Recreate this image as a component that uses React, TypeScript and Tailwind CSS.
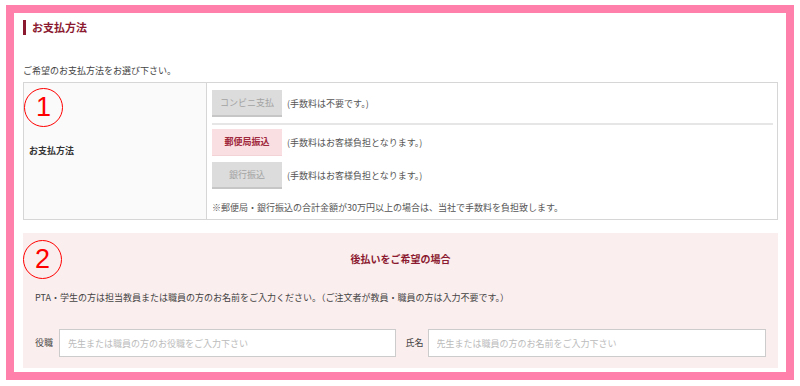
import React from 'react';

const jp = { fontFamily: '"Noto Sans CJK JP", "Noto Sans", sans-serif' };

const Marker: React.FC<{ n: string; top: string }> = ({ n, top }) => (
    <div
        className={`absolute left-0 ${top} w-[39px] h-[39px] rounded-full border-[1.5px] border-[#ff0000] flex items-center justify-center text-[#ff0000] text-[27px] leading-none`}
        style={{ fontFamily: '"Liberation Sans", Arial, sans-serif' }}
    >
        {n}
    </div>
);

interface MethodProps {
    label: string;
    note: string;
    active?: boolean;
}

const MethodRow: React.FC<MethodProps> = ({ label, note, active }) => (
    <div className="flex items-center gap-[5px]">
        <button
            type="button"
            className={
                active
                    ? 'w-[70px] h-[27px] bg-[#f9dfe1] text-[#a0283c] text-[9px] font-bold border-b border-[#f3d3d6]'
                    : 'w-[70px] h-[27px] bg-[#dcdcdc] text-[#a3a3a3] text-[9px] border-b-2 border-[#c6c6c6]'
            }
        >
            {label}
        </button>
        <span className="text-[9px] text-[#555]">{note}</span>
    </div>
);

const App: React.FC = () => {
    return (
        <div className="w-[800px] h-[386px] bg-white pt-[5px] px-[6px]" style={jp}>
            <div className="h-[375px] border-8 border-[#ff80ab] bg-white pt-[7px] pl-[9px] pr-[8px]">
                <div className="flex items-center gap-[6px] h-[15px]">
                    <div className="w-[3px] h-[15px] bg-[#8b1a30]" />
                    <h2 className="text-[11px] font-bold text-[#8b1a30] leading-none">お支払方法</h2>
                </div>

                <p className="mt-[29px] text-[9px] leading-[14px] text-[#444]">ご希望のお支払方法をお選び下さい。</p>

                <div className="relative mt-[4px] grid grid-cols-[183px_1fr] border border-[#d6d6d6] h-[138px]">
                    <Marker n="1" top="top-[5px]" />
                    <div className="bg-[#fafafa] border-r border-[#d6d6d6] flex items-center pl-[5px]">
                        <span className="text-[9px] font-bold text-[#333]">お支払方法</span>
                    </div>
                    <div className="pt-[7px] pl-[5px] pr-[4px]">
                        <MethodRow label="コンビニ支払" note="(手数料は不要です。)" />
                        <div className="mt-[6px] h-[2px] bg-[#e6e6e6]" />
                        <div className="mt-[4px] flex flex-col gap-[6px]">
                            <MethodRow label="郵便局振込" note="(手数料はお客様負担となります。)" active />
                            <MethodRow label="銀行振込" note="(手数料はお客様負担となります。)" />
                        </div>
                        <p className="mt-[12px] text-[9px] leading-[14px] text-[#555]">
                            ※郵便局・銀行振込の合計金額が30万円以上の場合は、当社で手数料を負担致します。
                        </p>
                    </div>
                </div>

                <div className="relative mt-[13px] bg-[#fbeeee] h-[135px] pt-[19px] px-[12px]">
                    <Marker n="2" top="top-[7px]" />
                    <h3 className="text-center text-[10px] leading-[14px] font-bold text-[#8b1a30]">後払いをご希望の場合</h3>
                    <p className="mt-[25px] text-[9px] leading-[14px] text-[#444]">
                        PTA・学生の方は担当教員または職員の方のお名前をご入力ください。（ご注文者が教員・職員の方は入力不要です。）
                    </p>
                    <div className="mt-[24px] grid grid-cols-2 gap-[10px]">
                        <label className="flex items-center gap-[6px]">
                            <span className="text-[9px] text-[#444] shrink-0">役職</span>
                            <input
                                className="w-full h-[28px] bg-white border border-[#cccccc] px-2 text-[9px] placeholder:text-[#bbbbbb] outline-none"
                                placeholder="先生または職員の方のお役職をご入力下さい"
                            />
                        </label>
                        <label className="flex items-center gap-[4px]">
                            <span className="text-[9px] text-[#444] shrink-0">氏名</span>
                            <input
                                className="w-full h-[28px] bg-white border border-[#cccccc] px-2 text-[9px] placeholder:text-[#bbbbbb] outline-none"
                                placeholder="先生または職員の方のお名前をご入力下さい"
                            />
                        </label>
                    </div>
                </div>
            </div>
        </div>
    );
};

export default App;
